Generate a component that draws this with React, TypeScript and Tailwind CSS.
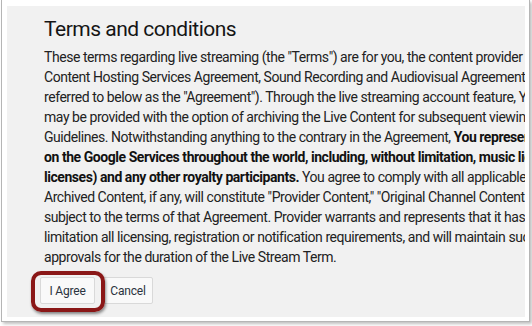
const lines: { text: React.ReactNode }[] = [
  { text: 'These terms regarding live streaming (the "Terms") are for you, the content provider ("You")' },
  { text: "Content Hosting Services Agreement, Sound Recording and Audiovisual Agreement, or" },
  { text: 'referred to below as the "Agreement"). Through the live streaming account feature, You' },
  { text: "may be provided with the option of archiving the Live Content for subsequent viewing" },
  {
    text: (
      <>
        Guidelines. Notwithstanding anything to the contrary in the Agreement,{" "}
        <b className="font-bold text-[#111]">You represent</b>
      </>
    ),
  },
  {
    text: (
      <b className="font-bold text-[#111]">
        on the Google Services throughout the world, including, without limitation, music licenses
      </b>
    ),
  },
  {
    text: (
      <>
        <b className="font-bold text-[#111]">licenses) and any other royalty participants.</b> You agree to comply with all applicable
      </>
    ),
  },
  { text: 'Archived Content, if any, will constitute "Provider Content," "Original Channel Content"' },
  { text: "subject to the terms of that Agreement. Provider warrants and represents that it has" },
  { text: "limitation all licensing, registration or notification requirements, and will maintain such" },
  { text: "approvals for the duration of the Live Stream Term." },
];

export default function App() {
  return (
    <div className="w-[532px] h-[326px] bg-white overflow-hidden" style={{ fontFamily: "Roboto, 'Liberation Sans', sans-serif" }}>
      <div className="ml-[1px] w-[529px] h-[322px] border-l border-r border-b border-[#b5b5b5] shadow-[2px_2px_3px_rgba(0,0,0,0.25)] flex pt-[6px] pl-[5px] pr-[4px] pb-[4px]">
        <div className="flex-1 bg-[#f1f1f1] overflow-hidden pl-[37px] pt-[8px]">
          <h1 className="text-[21px] leading-[30px] tracking-[-0.5px] text-[#151515] whitespace-nowrap">Terms and conditions</h1>
          <div className="mt-[3px] text-[14px] leading-[20px] tracking-[-0.45px] text-[#222]">
            {lines.map((l, i) => (
              <div key={i} className="whitespace-nowrap">
                {l.text}
              </div>
            ))}
          </div>
          <div className="mt-[10px] -ml-[4px] flex gap-[8px] items-center">
            <div className="relative">
              <button className="h-[27px] w-[55px] bg-[#f9f9f9] border border-[#d9d9d9] rounded-[2px] text-[12px] tracking-[-0.2px] text-[#2b3440]">
                I Agree
              </button>
              <div className="absolute left-[-9px] right-[-10px] top-[-6px] bottom-[-8px] border-[4px] border-[#8a1717] rounded-[10px] shadow-[1px_2px_3px_rgba(0,0,0,0.45)]"></div>
            </div>
            <button className="h-[27px] w-[50px] bg-[#f9f9f9] border border-[#d9d9d9] rounded-[2px] text-[12px] tracking-[-0.2px] text-[#2b3440]">
              Cancel
            </button>
          </div>
        </div>
      </div>
    </div>
  );
}
